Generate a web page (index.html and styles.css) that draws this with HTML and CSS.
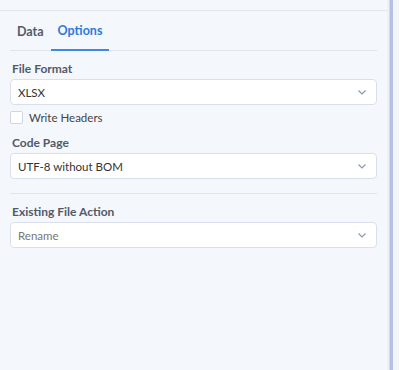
FILE: index.html
```html
<!DOCTYPE html>
<html lang="en">
<head>
    <meta charset="UTF-8">
    <meta name="viewport" content="width=device-width, initial-scale=1.0">
    <title>Export Options</title>
    <link rel="stylesheet" href="styles.css">
</head>
<body>
    <div class="layout">
        <div class="panel">
            <div class="panel-top"></div>
            <div class="panel-body">
                <!-- Tabs -->
                <div class="tabs">
                    <div class="tab">Data</div>
                    <div class="tab active">Options</div>
                </div>

                <div class="field-label">File Format</div>
                <div class="select">
                    <span>XLSX</span>
                    <svg class="chevron" width="8" height="5" viewBox="0 0 8 5"><path d="M0.5 0.5 L4 4 L7.5 0.5" fill="none" stroke="#8a98b3" stroke-width="1.2"/></svg>
                </div>
                <label class="check-row">
                    <span class="checkbox"></span>
                    <span>Write Headers</span>
                </label>

                <div class="field-label">Code Page</div>
                <div class="select">
                    <span>UTF-8 without BOM</span>
                    <svg class="chevron" width="8" height="5" viewBox="0 0 8 5"><path d="M0.5 0.5 L4 4 L7.5 0.5" fill="none" stroke="#8a98b3" stroke-width="1.2"/></svg>
                </div>

                <div class="divider"></div>

                <div class="field-label">Existing File Action</div>
                <div class="select placeholder">
                    <span>Rename</span>
                    <svg class="chevron" width="8" height="5" viewBox="0 0 8 5"><path d="M0.5 0.5 L4 4 L7.5 0.5" fill="none" stroke="#8a98b3" stroke-width="1.2"/></svg>
                </div>
            </div>
        </div>
        <div class="gutter">
            <div class="gutter-line"></div>
            <div class="gutter-bar"></div>
        </div>
    </div>
</body>
</html>
```

FILE: styles.css
```css
body {
    margin: 0;
    padding: 0;
    background: #f4f7fc;
    font-family: 'Lato', 'Noto Sans', sans-serif;
    font-size: 11.5px;
    color: #333;
}

.layout {
    display: flex;
    height: 370px;
}

.panel {
    width: 387px;
    background: #f4f7fc;
}

.panel-top {
    height: 10px;
    border-bottom: 1px solid #e2e7ef;
}

.panel-body {
    padding: 0 10px;
}

.tabs {
    display: flex;
    height: 39px;
    border-bottom: 1px solid #dfe4ed;
}

.tab {
    padding: 2px 7px 0;
    line-height: 38px;
    font-size: 12.5px;
    font-weight: 700;
    color: #525a69;
}

.tab.active {
    color: #2b7ade;
    border-bottom: 2px solid #3d8ae6;
    margin-bottom: -1px;
    line-height: 36px;
}

.field-label {
    margin-top: 10px;
    margin-bottom: 2px;
    padding-left: 2px;
    line-height: 16px;
    font-weight: 700;
    font-size: 12px;
    color: #525a69;
}

.select {
    height: 24px;
    border: 1px solid #dae0eb;
    border-radius: 4px;
    background: #fff;
    display: flex;
    align-items: center;
    justify-content: space-between;
    padding: 0 8px 0 7px;
    color: #333;
}

.select.placeholder {
    color: #777;
}

.chevron {
    margin-right: 2px;
}

.check-row {
    display: flex;
    align-items: center;
    gap: 6px;
    margin-top: 4px;
    height: 16px;
    color: #444;
}

.checkbox {
    width: 11px;
    height: 11px;
    border: 1px solid #cfd6e2;
    border-radius: 2px;
    background: #fff;
}

.divider {
    margin-top: 14px;
    border-top: 1px solid #dfe4ed;
}

.gutter {
    display: flex;
    flex: 1;
    background: #f2f5fa;
}

.gutter-line {
    width: 2px;
    background: #eef1f6;
    border-right: 1px solid #d3dbea;
}

.gutter-bar {
    width: 3px;
    background: #b3c2e2;
}
```
